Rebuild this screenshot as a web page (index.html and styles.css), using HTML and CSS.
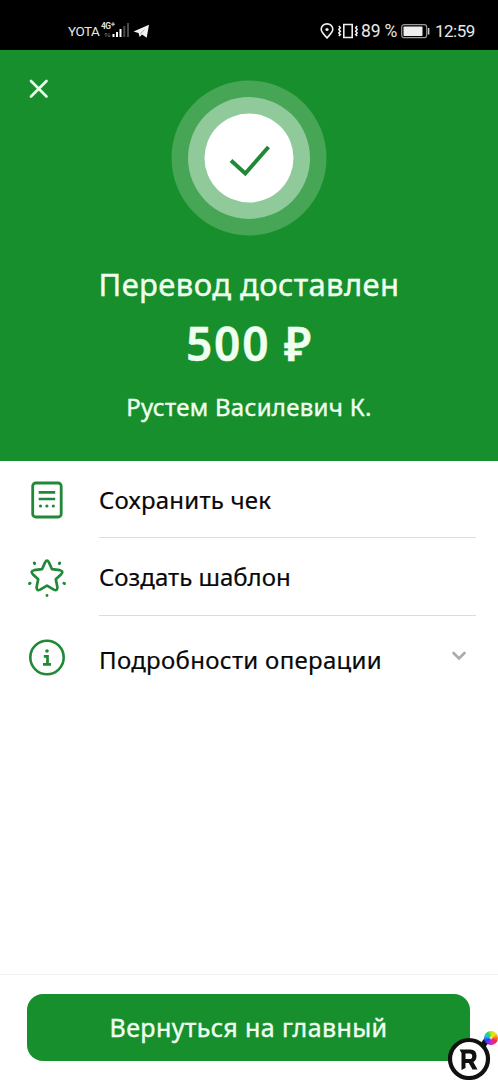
FILE: index.html
```html
<!DOCTYPE html>
<html lang="ru">
<head>
<meta charset="utf-8">
<title>Перевод доставлен</title>
<link rel="stylesheet" href="styles.css">
</head>
<body>
<div class="screen">
  <header class="status">
    <div class="status-left">
      <span class="carrier">YOTA</span>
      <svg class="signal" width="29" height="18" viewBox="0 0 29 18">
        <text x="0" y="7.500" class="net">4G</text>
        <path d="M10 3.200h4M12 1.200v4" stroke="#ddd" stroke-width="1"/>
        <path d="M5 16v-4M3.500 13.500L5 12l1.500 1.500M8 12v4M6.500 14.500L8 16l1.500-1.500" stroke="#555" fill="none"/>
        <path d="M12.500 16v-3M16 16v-5M19.500 16V8" stroke="#fff" stroke-width="2"/>
        <path d="M23.300 16V5M27 16V2" stroke="#4b4b4b" stroke-width="2"/>
      </svg>
      <svg class="plane" width="17" height="15" viewBox="0 0 17 15"><path d="M.5 7.600L16 .8l-2.300 13-4.700-3.300-2.300 2.400-1.200-4z" fill="#f2f2f2"/><path d="M7 10.300L11.500 5.500" stroke="#777" stroke-width=".6" fill="none"/></svg>
    </div>
    <div class="status-right">
      <svg width="14" height="16" viewBox="0 0 14 16"><path d="M7 15C4 11.500 1.200 9 1.200 6.200a5.800 5.300 0 0 1 11.600 0C12.800 9 10 11.500 7 15z" fill="none" stroke="#eee" stroke-width="1.600"/><circle cx="7" cy="6.500" r="1.600" fill="#eee"/></svg>
      <svg class="vibrate" width="20" height="16" viewBox="0 0 20 16"><path d="M5.800 1.500h8.400v13H5.800z" fill="none" stroke="#eee" stroke-width="1.600"/><path d="M.8 3l1.500 1.700L.8 6.500l1.500 1.700L.8 10l1.500 1.700L.8 13M19.200 3l-1.500 1.700 1.500 1.800-1.500 1.700 1.500 1.800-1.500 1.700 1.500 1.300" fill="none" stroke="#eee" stroke-width="1.600"/></svg>
      <span class="charge">89 %</span>
      <svg class="battery" width="29" height="15" viewBox="0 0 29 15"><rect x=".7" y=".7" width="25" height="13" rx="2.500" fill="none" stroke="#999" stroke-width="1.200"/><rect x="2.500" y="2.500" width="19" height="9.500" rx=".8" fill="#eee"/><path d="M27.600 4v6.500" stroke="#ccc" stroke-width="1.600"/></svg>
      <span class="clock">12:59</span>
    </div>
  </header>

  <section class="hero">
    <svg class="close" width="22" height="22" viewBox="0 0 22 22"><path d="M3 3l15.500 15.500M18.500 3L3 18.500" stroke="#eaffea" stroke-width="2.700" stroke-linecap="round"/></svg>
    <svg class="success" width="156" height="156" viewBox="0 0 156 156">
      <circle cx="78" cy="78" r="77.500" fill="#46a655"/>
      <circle cx="78" cy="78" r="61" fill="#90ca9a"/>
      <circle cx="78" cy="78" r="44.500" fill="#fff"/>
      <path d="M60 80.500L74.300 93.500L97.500 67" fill="none" stroke="#218838" stroke-width="4"/>
    </svg>
    <h1 class="title">Перевод доставлен</h1>
    <div class="amount">500 ₽</div>
    <div class="recipient">Рустем Василевич К.</div>
  </section>

  <main class="actions">
    <div class="row">
      <svg class="icon" width="40" height="40" viewBox="0 0 40 40" fill="none" stroke="#218838"><rect x="5.700" y="3" width="28.500" height="34" rx="3" stroke-width="2.800"/><path d="M11.700 12.300h16.500M11.700 19h16.500" stroke-width="2.700"/><path d="M13.500 26h.01M19.900 26h.01M26.300 26h.01" stroke-width="3.200" stroke-linecap="round"/></svg>
      <span class="label save">Сохранить чек</span>
    </div>
    <div class="row">
      <svg class="icon" width="40" height="42" viewBox="0 0 40 42" fill="none" stroke="#218838"><path d="M18.100 6.400Q20 3 21.900 6.400L25 13.200L32.900 14.200Q37 15.200 34.200 18.200L28.800 23.300L30.400 31.200Q30.700 35.500 26.800 33.600L20 29.600L13.200 33.600Q9.300 35.500 9.600 31.200L11.200 23.300L5.800 18.200Q3 15.200 7.100 14.200L15 13.200Z" stroke-width="2.700" stroke-linejoin="round"/><path d="M7.300 7l.4.500M32.700 7l-.4.500M2.500 27.500l.6-.3M37.500 27.500l-.6-.3M20 39.500v.1" stroke-width="2.900" stroke-linecap="round"/></svg>
      <span class="label template">Создать шаблон</span>
    </div>
    <div class="row row-details">
      <svg class="icon" width="40" height="40" viewBox="0 0 40 40" fill="none" stroke="#218838"><circle cx="20" cy="20.500" r="16.700" stroke-width="2.600"/><path d="M16.800 19.300h3.700v7.800M16 27.300h8" stroke-width="2.700"/><circle cx="20" cy="14" r="1.800" fill="#218838" stroke="none"/></svg>
      <span class="label details">Подробности операции</span>
      <svg class="chevron" width="16" height="12" viewBox="0 0 16 12"><path d="M2.500 3l5.500 5.400L13.500 3" fill="none" stroke="#aaa" stroke-width="2.600" stroke-linecap="round"/></svg>
    </div>
  </main>

  <footer class="footer">
    <button class="home">Вернуться на главный</button>
  </footer>

  <div class="badge">
    <svg width="52" height="52" viewBox="0 0 52 52">
      <path d="M34 20L42 9" stroke="#111" stroke-width="6"/>
      <circle cx="22" cy="31" r="19" fill="#fff" stroke="#111" stroke-width="4.200"/>
      <path fill="#111" fill-rule="evenodd" d="M12.500 21.500H23.500Q29.500 21.500 29.500 28Q29.500 32.500 26.300 34L30.500 41.500H25.500L21.800 35H18.500V40L14.500 42V25ZM18.500 25.500V31H22.700Q25.200 31 25.200 28.200Q25.200 25.500 22.700 25.500Z"/>
    </svg>
    <i class="wheel"></i>
  </div>
</div>
</body>
</html>
```
FILE: styles.css
```css
* { box-sizing: border-box; }
body { margin: 0; background: #fff; font-family: "Noto Sans", sans-serif; color: #080808; }
.screen { position: relative; width: 498px; height: 1080px; display: flex; flex-direction: column; overflow: hidden; background: #fff; }
svg { display: block; flex: none; }

.status { height: 50px; flex: none; background: #000; color: #e8e8e8; display: flex; justify-content: space-between; padding: 12px 23px 0 68px; font-family: Roboto, sans-serif; white-space: nowrap; }
.status-left, .status-right { display: flex; align-items: center; height: 38px; }
.carrier { font-size: 13.5px; width: 33px; letter-spacing: -0.5px; }
.net { font: 700 8.5px Roboto, sans-serif; letter-spacing: -0.7px; fill: #ddd; }
.signal { margin-top: -2px; }
.plane { margin-left: 3px; }
.status-right { font-size: 17.5px; }
.vibrate { margin-left: 4px; }
.charge { margin-left: 3px; width: 36px; letter-spacing: -0.2px; }
.battery { margin-left: 4px; }
.clock { margin-left: 5px; width: 40px; font-size: 17px; letter-spacing: -0.5px; }

.hero { position: relative; height: 411px; flex: none; background: #178f2c; color: #effff0; display: flex; flex-direction: column; align-items: center; padding-top: 30px; white-space: nowrap; }
.close { position: absolute; left: 28px; top: 28px; }
.title { margin: 28px 0 0; font-size: 31px; line-height: 40px; font-weight: 400; letter-spacing: 0.4px; -webkit-text-stroke: 0.4px currentColor; }
.amount { margin-top: 9px; padding-left: 1px; font-size: 46px; line-height: 60px; font-weight: 600; letter-spacing: 1.8px; -webkit-text-stroke: 0.5px currentColor; }
.recipient { margin-top: 17px; font-size: 24px; line-height: 34px; letter-spacing: 0.3px; -webkit-text-stroke: 0.4px currentColor; }

.actions { flex: 1; padding: 0 22px 0 27px; }
.row { height: 77.4px; display: flex; align-items: center; }
.label { flex: 1; height: 77.4px; line-height: 77px; margin-left: 32px; font-size: 24px; white-space: nowrap; border-bottom: 1px solid #dcdcdc; -webkit-text-stroke: 0.2px currentColor; }
.save { letter-spacing: 0.2px; }
.row-details { padding-top: 5px; }
.row-details .label { border: 0; line-height: 84px; letter-spacing: 0.3px; }
.chevron { margin: -1px 9px 0 0; }

.footer { height: 106px; flex: none; border-top: 1px solid #f3f3f3; padding: 19px 28px 0 27px; }
.home { display: block; width: 443px; height: 66.5px; border: 0; border-radius: 16px; background: #178f2c; color: #effff0; font: 400 25px/65px "Noto Sans", sans-serif; letter-spacing: 0.4px; -webkit-text-stroke: 0.4px currentColor; padding: 0; white-space: nowrap; }

.badge { position: absolute; right: 0; bottom: 0; width: 51px; height: 52px; }
.wheel { position: absolute; left: 37px; top: 3px; width: 14px; height: 14px; border-radius: 50%; background: radial-gradient(circle, #fff 0, rgba(255, 255, 255, 0) 20%), conic-gradient(#b6e61d, #ffe01b 12%, #ff8a18 22%, #f5253d 34%, #e325b9 46%, #812bec 58%, #2743ed 68%, #24bcec 80%, #28d84c 91%, #b6e61d); }
```
